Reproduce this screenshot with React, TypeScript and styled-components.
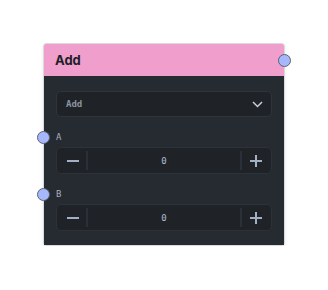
import React from "react";
import styled, { createGlobalStyle } from "styled-components";

const Global = createGlobalStyle`
  html, body { margin: 0; padding: 0; background: #ffffff; }
  * { box-sizing: border-box; }
`;

const Page = styled.div`
  padding: 43px 0 0 43px;
`;

const Node = styled.div`
  width: 242px;
  border: 1px solid #d9dadd;
  border-radius: 3px;
  box-shadow: 0 2px 4px rgba(0, 0, 0, 0.08);
  position: relative;
`;

const Header = styled.div`
  position: relative;
  height: 32px;
  background: #f09fcd;
  display: flex;
  align-items: center;
  padding: 0 11px;
  font-family: Inter, "Liberation Sans", sans-serif;
  font-weight: 700;
  font-size: 13px;
  color: #1c2128;
  border-radius: 2px 2px 0 0;
`;

const Handle = styled.span<{ $side: "left" | "right" }>`
  position: absolute;
  top: 50%;
  ${(p) => (p.$side === "left" ? "left: -7px;" : "right: -7px;")}
  width: 13px;
  height: 13px;
  margin-top: -6.5px;
  border-radius: 50%;
  background: #a6b8fb;
  border: 1px solid #5b6170;
`;

const Body = styled.div`
  background: #262b31;
  padding: 15px 12px 14px;
  display: flex;
  flex-direction: column;
`;

const Select = styled.div`
  height: 26px;
  background: #1f2328;
  border: 1px solid #2f353d;
  border-radius: 5px;
  display: flex;
  align-items: center;
  justify-content: space-between;
  padding: 0 8px 0 9px;
  font-family: "DejaVu Sans Mono", monospace;
  font-size: 9px;
  font-weight: 700;
  color: #8c93a0;
`;

const Field = styled.div`
  margin-top: 14px;
  display: flex;
  flex-direction: column;
`;

const LabelRow = styled.div`
  position: relative;
  height: 12px;
  display: flex;
  align-items: center;
  font-family: "DejaVu Sans Mono", monospace;
  font-size: 9px;
  color: #a9b0bd;
  padding-left: 0;
`;

const LabelHandle = styled(Handle)`
  left: -19px;
`;

const Stepper = styled.div`
  margin-top: 4px;
  height: 27px;
  background: #1f2328;
  border: 1px solid #2c3239;
  border-radius: 5px;
  display: flex;
  align-items: stretch;
`;

const StepButton = styled.div<{ $side: "left" | "right" }>`
  width: 31px;
  display: flex;
  align-items: center;
  justify-content: center;
  position: relative;
  &::after {
    content: "";
    position: absolute;
    top: 3px;
    bottom: 3px;
    ${(p) => (p.$side === "left" ? "right: 0;" : "left: 0;")}
    width: 2px;
    background: #2a3037;
  }
`;

const Value = styled.div`
  flex: 1;
  display: flex;
  align-items: center;
  justify-content: center;
  font-family: "DejaVu Sans Mono", monospace;
  font-size: 9px;
  color: #b3bccb;
`;

const Minus = () => (
  <svg width="14" height="14" viewBox="0 0 14 14">
    <path d="M1 7h12" stroke="#a3afc2" strokeWidth="2" />
  </svg>
);

const Plus = () => (
  <svg width="14" height="14" viewBox="0 0 14 14">
    <path d="M1 7h12M7 1v12" stroke="#a3afc2" strokeWidth="2" />
  </svg>
);

const Chevron = () => (
  <svg width="11" height="7" viewBox="0 0 11 7">
    <path d="M1 1l4.5 4.5L10 1" stroke="#c7ced8" strokeWidth="1.5" fill="none" />
  </svg>
);

const NumberField = ({ label, value }: { label: string; value: number }) => (
  <Field>
    <LabelRow>
      <LabelHandle $side="left" />
      {label}
    </LabelRow>
    <Stepper>
      <StepButton $side="left">
        <Minus />
      </StepButton>
      <Value>{value}</Value>
      <StepButton $side="right">
        <Plus />
      </StepButton>
    </Stepper>
  </Field>
);

export default function App() {
  return (
    <>
      <Global />
      <Page>
        <Node>
          <Header>
            Add
            <Handle $side="right" />
          </Header>
          <Body>
            <Select>
              <span>Add</span>
              <Chevron />
            </Select>
            <NumberField label="A" value={0} />
            <NumberField label="B" value={0} />
          </Body>
        </Node>
      </Page>
    </>
  );
}
